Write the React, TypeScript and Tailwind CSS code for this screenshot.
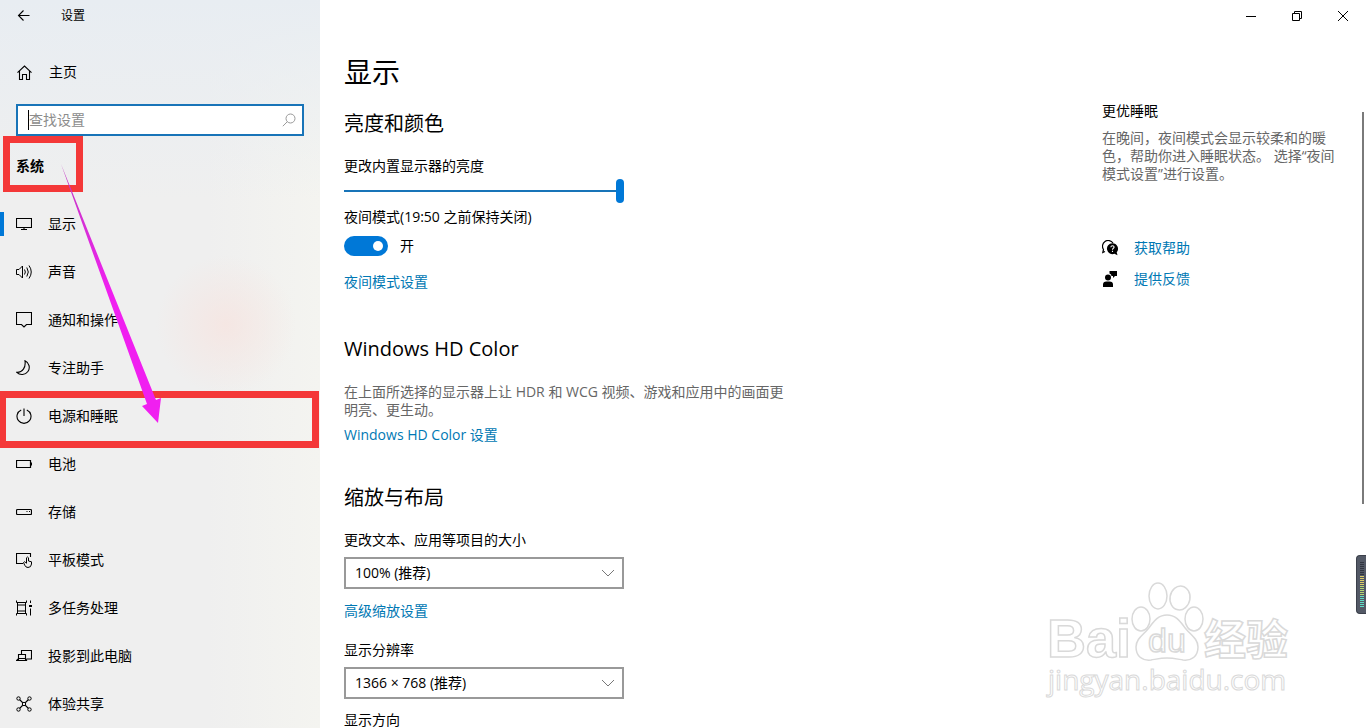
import { useState } from "react";
import type { ReactNode } from "react";

const FONT = "font-['Open_Sans','Noto_Sans_CJK_SC',sans-serif]";

function Icon({ children, size = 16 }: { children: ReactNode; size?: number }) {
  return (
    <svg
      width={size}
      height={size}
      viewBox={`0 0 ${size} ${size}`}
      fill="none"
      stroke="currentColor"
      strokeWidth="1"
      className="shrink-0"
      aria-hidden="true"
    >
      {children}
    </svg>
  );
}

const icons = {
  back: <path d="M13.500 7.500H2.500M7.500 2.500l-5 5 5 5" strokeWidth="1.1" />,
  home: <path d="M1.500 8.700 8.500 2l7 6.700M3.500 7v8.500h3v-5h4v5h3V7" strokeWidth="1.1" />,
  display: <path d="M.5 2.500h15v9H.5zM8 11.500v2M5 13.500h6" strokeWidth="1.1" />,
  sound: (
    <path d="M.5 5.500H3l3.500-3.500v12L3 10.500H.5zM8.500 5.500q1.700 2.500 0 5M10.800 3.500q3 4.500 0 9M13 1.500q4.500 6.500 0 13" />
  ),
  notify: <path d="M.5.5h15v12H10.500L8 15l-2.500-2.500h-5z" strokeWidth="1.1" />,
  moon: <path d="M9 .8a7.200 7.200 0 1 1-8.200 11.500C6.500 12.500 10 7.500 9 .8z" strokeWidth="1.1" />,
  power: <path d="M8 .5v7.500M5.200 2a7 7 0 1 0 5.600 0" strokeWidth="1.1" />,
  battery: <path d="M.5 4.500h14v7H.5zM15.500 6.500v3" strokeWidth="1.2" />,
  storage: (
    <>
      <rect x=".5" y="5.500" width="15" height="5" rx="1" strokeWidth="1.2" />
      <path d="M10.500 7.500h1M13 7.500h1" />
    </>
  ),
  tablet: (
    <>
      <path d="M7 11.500H.5v-10h14V5" strokeWidth="1.1" />
      <path d="M10.500 11V5.800q1-1.600 2 0V9l3 .8v2.200q-.3 3.500-3.500 3.500-2.300 0-3.300-2.300L7.500 10.500q.8-1.300 1.800-.3l1.200 1.300" />
    </>
  ),
  multitask: (
    <>
      <path d="M.5.5v2h10v-2M1.500 2.500v11M9.500 2.500v11M1.500 5h8M1.500 11h8M.5 15.500v-2h10v2M14.500.5v2.500M14.500 8.500v7" />
      <path d="M13 6h3" strokeWidth="2" />
    </>
  ),
  project: <path d="M5.500 6.500v-4h10v8.500H10.500M2.500 12V6.500h7V12M.5 12.500h10l-1-2h-7z" strokeWidth="1.1" />,
  share: (
    <>
      <path d="m3.500 3.500 9 9M12.500 3.500l-9 9" strokeWidth="1.1" />
      <circle cx="2.500" cy="2.500" r="1.700" fill="#efefef" />
      <circle cx="13.500" cy="2.500" r="1.700" fill="#efefef" />
      <circle cx="2.500" cy="13.500" r="1.700" fill="#efefef" />
      <circle cx="13.500" cy="13.500" r="1.700" fill="#efefef" />
      <circle cx="8" cy="8" r="1.700" fill="#efefef" />
    </>
  ),
};

const navItems = [
  { label: "显示", icon: icons.display },
  { label: "声音", icon: icons.sound },
  { label: "通知和操作", icon: icons.notify },
  { label: "专注助手", icon: icons.moon },
  { label: "电源和睡眠", icon: icons.power },
  { label: "电池", icon: icons.battery },
  { label: "存储", icon: icons.storage },
  { label: "平板模式", icon: icons.tablet },
  { label: "多任务处理", icon: icons.multitask },
  { label: "投影到此电脑", icon: icons.project },
  { label: "体验共享", icon: icons.share },
];

function Sidebar() {
  return (
    <aside className="w-80 shrink-0 bg-[radial-gradient(circle_at_226px_325px,#f6e4e0cc_0,#f6e8e400_70px),linear-gradient(to_bottom,#e8edf2,#e8edf200_200px),linear-gradient(to_right,#efefef_0,#efefef_65%,#f4f4f0_100%)]">
      <div className="flex h-8 items-center pl-4">
        <button aria-label="返回" className="mr-7">
          <Icon size={17}>{icons.back}</Icon>
        </button>
        <span className="text-xs">设置</span>
      </div>
      <a href="#home" className="mt-4 flex h-12 items-center gap-4 pl-4">
        <Icon size={17}>{icons.home}</Icon>
        主页
      </a>
      <div className="mx-4 mt-2 flex h-8 items-center border-2 border-[#1874b8] bg-white pr-1.5 pl-2.5">
        <span className="h-5 w-px bg-black" />
        <input
          aria-label="查找设置"
          placeholder="查找设置"
          className="min-w-0 flex-1 bg-transparent outline-none placeholder:text-[#8c8c8c]"
        />
        <svg width="14" height="14" viewBox="0 0 14 14" fill="none" stroke="#999" aria-hidden="true">
          <circle cx="8.500" cy="5.500" r="4.500" />
          <path d="M5.300 8.700.8 13.200" />
        </svg>
      </div>
      <h2 className="mb-1 flex h-15 items-center pl-4 font-bold">系统</h2>
      <nav>
        {navItems.map((item, i) => (
          <a
            key={item.label}
            href={`#${item.label}`}
            aria-current={i === 0 ? "page" : undefined}
            className="flex h-12 items-center"
          >
            <span className={i === 0 ? "h-6 w-1 bg-[#0078d7]" : "w-1"} />
            <span className="mr-4 ml-3">
              <Icon>{item.icon}</Icon>
            </span>
            {item.label}
          </a>
        ))}
      </nav>
    </aside>
  );
}

function SelectBox({ id, label, value }: { id: string; label: string; value: string }) {
  return (
    <div>
      <label htmlFor={id} className="block">
        {label}
      </label>
      <div className="relative mt-[7px] w-70">
        <select
          id={id}
          className="block h-8 w-full appearance-none border-2 border-[#999] bg-white pl-[9px] outline-none"
        >
          <option>{value}</option>
        </select>
        <svg
          width="14"
          height="8"
          viewBox="0 0 14 8"
          fill="none"
          stroke="#777"
          className="pointer-events-none absolute top-3 right-[9px]"
          aria-hidden="true"
        >
          <path d="m1 1 6 6 6-6" />
        </svg>
      </div>
    </div>
  );
}

function DisplaySettings() {
  const [brightness, setBrightness] = useState(100);
  const [night, setNight] = useState(true);

  return (
    <main className="min-w-0 flex-1 pt-5 pl-6">
      <h1 className="text-[28px] leading-10">显示</h1>

      <section>
        <h2 className="mt-[18px] text-xl leading-7">亮度和颜色</h2>
        <label htmlFor="brightness" className="mt-[18px] block">
          更改内置显示器的亮度
        </label>
        <input
          id="brightness"
          type="range"
          value={brightness}
          onChange={(e) => setBrightness(Number(e.target.value))}
          className="mt-[3px] block h-6 w-70 appearance-none bg-transparent [&::-webkit-slider-runnable-track]:h-0.5 [&::-webkit-slider-runnable-track]:bg-[#1874b8] [&::-webkit-slider-thumb]:-mt-[11px] [&::-webkit-slider-thumb]:h-6 [&::-webkit-slider-thumb]:w-2 [&::-webkit-slider-thumb]:appearance-none [&::-webkit-slider-thumb]:rounded-full [&::-webkit-slider-thumb]:bg-[#0078d7]"
        />
        <p id="night" className="mt-1">
          夜间模式(19:50 之前保持关闭)
        </p>
        <div className="mt-[9px] flex items-center gap-3">
          <button
            role="switch"
            aria-checked={night}
            aria-labelledby="night"
            onClick={() => setNight(!night)}
            className={`flex h-5 w-11 items-center rounded-full px-[5px] ${
              night ? "justify-end bg-[#0078d7]" : "justify-start bg-[#999]"
            }`}
          >
            <span className="size-2.5 rounded-full bg-white" />
          </button>
          <span>{night ? "开" : "关"}</span>
        </div>
        <a href="#night-settings" className="mt-4 block text-[#0078b4]">
          夜间模式设置
        </a>
      </section>

      <section>
        <h2 className="mt-[43px] text-xl leading-7">Windows HD Color</h2>
        <p className="mt-5 max-w-[448px] leading-[18px] text-[#666]">
          在上面所选择的显示器上让 HDR 和 WCG 视频、游戏和应用中的画面更明亮、更生动。
        </p>
        <a href="#hd-color" className="mt-1.5 block text-[#0078b4]">
          Windows HD Color 设置
        </a>
      </section>

      <section>
        <h2 className="mt-[39px] mb-[18px] text-xl leading-7">缩放与布局</h2>
        <SelectBox id="scale" label="更改文本、应用等项目的大小" value="100% (推荐)" />
        <a href="#scaling" className="mt-3 mb-[19px] block text-[#0078b4]">
          高级缩放设置
        </a>
        <SelectBox id="resolution" label="显示分辨率" value="1366 × 768 (推荐)" />
        <p className="mt-[11px]">显示方向</p>
      </section>
    </main>
  );
}

function HelpPanel() {
  return (
    <aside className="mr-6 w-60 shrink-0 pt-[69px]">
      <h2>更优睡眠</h2>
      <p className="mt-2 leading-[18px] text-[#666]">
        在晚间，夜间模式会显示较柔和的暖色，帮助你进入睡眠状态。 选择“夜间模式设置”进行设置。
      </p>
      <a href="#help" className="mt-[55px] flex items-center gap-4 text-[#0078b4]">
        <svg width="16" height="16" viewBox="0 0 16 16" className="text-black" aria-hidden="true">
          <path d="M3 11.500.8 12.500l.7-3A5.500 5.500 0 1 1 11 3" fill="none" stroke="currentColor" strokeWidth="1.2" />
          <path d="M10.300 3.200a5.500 5.500 0 1 0 2.200 10.600l3 1.400-.8-3a5.500 5.500 0 0 0-4.400-9z" fill="currentColor" />
          <path d="M8.800 7.200q.2-1.500 1.700-1.500t1.600 1.300q0 .9-1 1.500-.6.400-.6 1.200M10.500 10.800v1.200" fill="none" stroke="#fff" strokeWidth="1.1" />
        </svg>
        获取帮助
      </a>
      <a href="#feedback" className="mt-[11px] flex items-center gap-4 text-[#0078b4]">
        <svg width="16" height="16" viewBox="0 0 16 16" fill="currentColor" className="text-black" aria-hidden="true">
          <circle cx="6" cy="6.500" r="3" />
          <path d="M1 16v-2.500q0-3 3.500-3h3q3.500 0 3.500 3V16zM7.500 0H15v5h-2l-2 2V5H9.500Q9.500 3 7.500 2.500z" />
        </svg>
        提供反馈
      </a>
    </aside>
  );
}

function WindowButtons() {
  return (
    <div className="flex h-8 shrink-0 justify-end">
      <button aria-label="最小化" className="grid w-[46px] place-items-center">
        <Icon size={10}>
          <path d="M0 5.500h10" />
        </Icon>
      </button>
      <button aria-label="还原" className="grid w-[46px] place-items-center">
        <Icon size={10}>
          <path d="M.5 2.500h7v7h-7zM2.500 2.500v-2h7v7h-2" />
        </Icon>
      </button>
      <button aria-label="关闭" className="grid w-[46px] place-items-center">
        <Icon size={10}>
          <path d="m0 0 10 10M10 0 0 10" />
        </Icon>
      </button>
    </div>
  );
}

function Watermark() {
  return (
    <svg
      width="260"
      height="130"
      viewBox="0 0 260 130"
      fill="#fff"
      stroke="#d9d9d9"
      strokeWidth="1.5"
      className="pointer-events-none absolute right-[66px] bottom-[23px]"
    >
      <g className="font-['Liberation_Sans','Noto_Sans_CJK_SC',sans-serif]">
        <text x="7" y="82" fontSize="54" fontWeight="700">
          Bai
        </text>
        <ellipse cx="101" cy="44" rx="9" ry="12" />
        <ellipse cx="118" cy="21" rx="9" ry="13" />
        <ellipse cx="140" cy="23" rx="10" ry="12" transform="rotate(10 140 23)" />
        <ellipse cx="154" cy="44" rx="9" ry="12" />
        <path d="M127 40c10 0 14 8 19 14s12 10 12 18c0 9-6 14-15 13-6-1-10-2-16-2s-10 1-16 2c-9 1-15-4-15-13 0-8 7-12 12-18s9-14 19-14z" />
        <text x="108" y="77" fontSize="34">
          du
        </text>
        <text x="164" y="80" fontSize="42" fontWeight="700">
          经验
        </text>
      </g>
      <text x="8" y="115" fontSize="28" strokeWidth="1" className="font-['Open_Sans',sans-serif]">
        jingyan.baidu.com
      </text>
    </svg>
  );
}

function Annotations() {
  return (
    <div className="pointer-events-none absolute inset-0" aria-hidden="true">
      <div className="absolute top-[136px] left-[3px] h-14 w-20 border-7 border-[#f43838]" />
      <div className="absolute top-[391px] -left-px h-[57px] w-80 border-7 border-[#f43838]" />
      <svg width="110" height="264" viewBox="0 0 110 264" className="absolute top-[162px] left-[58px]">
        <defs>
          <linearGradient id="arrow" x1="0" y1="0" x2="0" y2="1">
            <stop offset="0" stopColor="#c03cc0" />
            <stop offset=".5" stopColor="#f01ff0" />
          </linearGradient>
        </defs>
        <path d="M3 2 98 238 103 236 100 261 84 244 89 242z" fill="url(#arrow)" />
      </svg>
    </div>
  );
}

const levels = Array.from({ length: 23 }, (_, i) => i);

function levelColor(i: number) {
  if (i < 7) return "#30353f";
  if (i < 12) return "#dccd68";
  if (i < 17) return "#b5d673";
  return "#5fdcc4";
}

function SideGadget() {
  return (
    <div className="absolute top-[555px] right-0 h-[59px] w-2.5 rounded-l-[4px] border border-r-0 border-[#3b404b] bg-[#535966]">
      <svg width="9" height="57" viewBox="0 0 9 57" aria-hidden="true">
        {levels.map((i) => (
          <rect key={i} x="3" y={6 + i * 2} width="4" height="1" fill={levelColor(i)} />
        ))}
      </svg>
    </div>
  );
}

export default function App() {
  return (
    <div className={`relative flex h-screen overflow-hidden bg-white text-sm text-black ${FONT}`}>
      <Sidebar />
      <div className="flex min-w-0 flex-1 flex-col">
        <WindowButtons />
        <div className="flex">
          <DisplaySettings />
          <HelpPanel />
        </div>
      </div>
      <div className="absolute top-28 right-0.5 h-98 w-0.5 bg-[#7a7a7a]" />
      <SideGadget />
      <Watermark />
      <Annotations />
    </div>
  );
}
